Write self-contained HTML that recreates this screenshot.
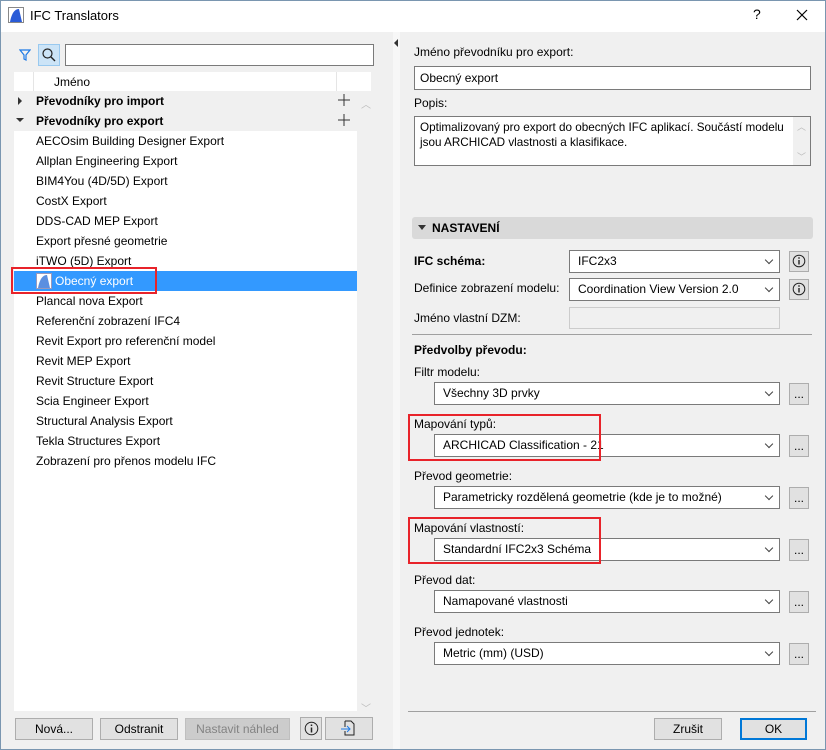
<!DOCTYPE html>
<html><head><meta charset="utf-8"><style>
*{box-sizing:border-box;margin:0;padding:0}
body{width:826px;height:750px;overflow:hidden;font-family:"Liberation Sans",sans-serif;font-size:12px;color:#000;background:#f0f0f0;position:relative}
.a{position:absolute}
.win{left:0;top:0;width:826px;height:750px;border:1px solid #7a96b0;border-top:none}
.title{left:0;top:0;width:826px;height:32px;background:#fff;border-top:1px solid #7a96b0}
.row{position:absolute;left:14px;width:343px;height:20px;line-height:20px;padding-left:22px;white-space:nowrap}
.grp{background:#f0f0f0;font-weight:bold}
.lbl{position:absolute;left:414px;white-space:nowrap}
.dd{position:absolute;background:#fff;border:1px solid #7a7a7a;height:23px;line-height:21px;padding-left:8px;white-space:nowrap}
.dd:after{content:"";position:absolute;right:7px;top:6px;width:5px;height:5px;border-right:1px solid #444;border-bottom:1px solid #444;transform:rotate(45deg)}
.btn{position:absolute;background:#e1e1e1;border:1px solid #adadad;text-align:center;height:22px;line-height:20px}
.dots{width:20px;height:22px;left:789px}
.red{position:absolute;border:2px solid #e8232a}
</style></head><body>
<div class="a title"></div>
<div class="a win"></div>
<svg class="a" style="left:8px;top:7px" width="16" height="16"><rect x="0.5" y="0.5" width="15" height="15" fill="#fff" stroke="#888"/><path d="M2 15 C4 4 8 2 11 2 L14 15 Z" fill="#2a5bd7"/></svg>
<div class="a" style="left:30px;top:8px;font-size:13px">IFC Translators</div>
<div class="a" style="left:753px;top:6px;font-size:14px">?</div>
<svg class="a" style="left:796px;top:9px" width="12" height="12"><path d="M1 1L11 11M11 1L1 11" stroke="#000" stroke-width="1.2"/></svg>

<svg class="a" style="left:19px;top:48px" width="12" height="14"><path d="M1 2H11L7 7V12L5 11V7Z" fill="none" stroke="#1e7ae6" stroke-width="1.2"/></svg>
<div class="a" style="left:38px;top:44px;width:22px;height:22px;background:#cce4f7;border:1px solid #99c9ef"></div>
<svg class="a" style="left:41px;top:47px" width="16" height="16"><circle cx="6.5" cy="6.5" r="4.5" fill="none" stroke="#222" stroke-width="1.2"/><path d="M10 10L14 14" stroke="#222" stroke-width="1.4"/></svg>
<div class="a" style="left:65px;top:44px;width:309px;height:22px;background:#fff;border:1px solid #7a7a7a"></div>
<div class="a" style="left:14px;top:72px;width:357px;height:639px;background:#fff"></div>
<div class="a" style="left:357px;top:91px;width:14px;height:620px;background:#f0f0f0"></div>
<div class="a" style="left:361px;top:96px;color:#bbb;font-size:10px">︿</div>
<div class="a" style="left:361px;top:700px;color:#bbb;font-size:10px">﹀</div>
<div class="row" style="top:72px;padding-left:20px;border-left:1px solid #e5e5e5;left:33px;width:304px;border-right:1px solid #e5e5e5">Jméno</div>
<div class="row grp" style="top:91px">Převodníky pro import</div>
<div class="row grp" style="top:111px">Převodníky pro export</div>
<svg class="a" style="left:16px;top:96px" width="8" height="30"><path d="M2 1L6 5L2 9Z" fill="#333"/><path d="M0 22H8L4 26Z" fill="#333"/></svg>
<svg class="a" style="left:338px;top:94px" width="12" height="32"><path d="M6 0V12M0 6H12M6 20V32M0 26H12" stroke="#333"/></svg>
<div class="row" style="top:131px">AECOsim Building Designer Export</div>
<div class="row" style="top:151px">Allplan Engineering Export</div>
<div class="row" style="top:171px">BIM4You (4D/5D) Export</div>
<div class="row" style="top:191px">CostX Export</div>
<div class="row" style="top:211px">DDS-CAD MEP Export</div>
<div class="row" style="top:231px">Export přesné geometrie</div>
<div class="row" style="top:251px">iTWO (5D) Export</div>
<div class="row" style="top:271px;background:#3399ff;color:#fff;padding-left:41px">Obecný export</div>
<svg class="a" style="left:36px;top:273px" width="16" height="16"><rect x="0.5" y="0.5" width="15" height="15" fill="#fff" stroke="#99b"/><path d="M2 15 C4 4 8 2 11 2 L14 15 Z" fill="#5b8fe0"/></svg>
<div class="row" style="top:291px">Plancal nova Export</div>
<div class="row" style="top:311px">Referenční zobrazení IFC4</div>
<div class="row" style="top:331px">Revit Export pro referenční model</div>
<div class="row" style="top:351px">Revit MEP Export</div>
<div class="row" style="top:371px">Revit Structure Export</div>
<div class="row" style="top:391px">Scia Engineer Export</div>
<div class="row" style="top:411px">Structural Analysis Export</div>
<div class="row" style="top:431px">Tekla Structures Export</div>
<div class="row" style="top:451px">Zobrazení pro přenos modelu IFC</div>
<div class="red" style="left:11px;top:267px;width:146px;height:27px"></div>

<div class="btn" style="left:15px;top:718px;width:78px">Nová...</div>
<div class="btn" style="left:100px;top:718px;width:78px">Odstranit</div>
<div class="btn" style="left:185px;top:718px;width:105px;background:#cccccc;border-color:#bfbfbf;color:#838383">Nastavit náhled</div>
<div class="btn" style="left:300px;top:717px;width:22px;height:23px"></div>
<svg class="a" style="left:304px;top:721px" width="15" height="15"><circle cx="7.5" cy="7.5" r="6.3" fill="none" stroke="#222"/><path d="M7.5 6.5V11.5M7.5 3.5V5" stroke="#222" stroke-width="1.5"/></svg>
<div class="btn" style="left:325px;top:717px;width:48px;height:23px"></div>
<svg class="a" style="left:340px;top:720px" width="16" height="17"><path d="M5 1H11L14 4V15H5V11M5 7V1" fill="none" stroke="#222"/><path d="M1 9H10M7 6L10 9L7 12" fill="none" stroke="#1e7ae6"/></svg>

<div class="a" style="left:393px;top:32px;width:7px;height:717px;background:#f7f7f7"></div>
<svg class="a" style="left:394px;top:39px" width="4" height="8"><path d="M4 0V8L0 4Z" fill="#333"/></svg>

<div class="lbl" style="top:45px">Jméno převodníku pro export:</div>
<div class="a" style="left:414px;top:66px;width:397px;height:24px;background:#fff;border:1px solid #7a7a7a;padding-left:5px;line-height:22px">Obecný export</div>
<div class="lbl" style="top:96px">Popis:</div>
<div class="a" style="left:414px;top:116px;width:397px;height:50px;background:#fff;border:1px solid #7a7a7a;padding:3px 5px;line-height:15px;font-size:11.7px;white-space:nowrap">Optimalizovaný pro export do obecných IFC aplikací. Součástí modelu<br>jsou ARCHICAD vlastnosti a klasifikace.</div>
<div class="a" style="left:793px;top:117px;width:17px;height:48px;background:#f0f0f0"></div>
<div class="a" style="left:797px;top:120px;color:#bbb;font-size:9px">︿</div>
<div class="a" style="left:797px;top:150px;color:#bbb;font-size:9px">﹀</div>

<div class="a" style="left:412px;top:217px;width:401px;height:22px;background:#d9d9d9;border-radius:3px"></div>
<svg class="a" style="left:418px;top:225px" width="8" height="5"><path d="M0 0H8L4 5Z" fill="#333"/></svg>
<div class="a" style="left:432px;top:221px;font-weight:bold">NASTAVENÍ</div>

<div class="lbl" style="top:254px;font-weight:bold">IFC schéma:</div>
<div class="dd" style="left:569px;top:250px;width:211px">IFC2x3</div>
<div class="btn" style="left:789px;top:251px;width:20px;height:21px"></div>
<svg class="a" style="left:792px;top:254px" width="14" height="14"><circle cx="7" cy="7" r="5.8" fill="none" stroke="#222"/><path d="M7 6V10.5M7 3.3V4.8" stroke="#222" stroke-width="1.4"/></svg>
<div class="lbl" style="top:281px">Definice zobrazení modelu:</div>
<div class="dd" style="left:569px;top:278px;width:211px">Coordination View Version 2.0</div>
<div class="btn" style="left:789px;top:279px;width:20px;height:21px"></div>
<svg class="a" style="left:792px;top:282px" width="14" height="14"><circle cx="7" cy="7" r="5.8" fill="none" stroke="#222"/><path d="M7 6V10.5M7 3.3V4.8" stroke="#222" stroke-width="1.4"/></svg>
<div class="lbl" style="top:311px">Jméno vlastní DZM:</div>
<div class="a" style="left:569px;top:307px;width:211px;height:22px;background:#f0f0f0;border:1px solid #ccc"></div>
<div class="a" style="left:412px;top:334px;width:400px;height:1px;background:#a0a0a0"></div>

<div class="lbl" style="top:343px;font-weight:bold">Předvolby převodu:</div>
<div class="lbl" style="top:365px">Filtr modelu:</div>
<div class="dd" style="left:434px;top:382px;width:346px">Všechny 3D prvky</div>
<div class="btn dots" style="top:383px">...</div>
<div class="lbl" style="top:417px">Mapování typů:</div>
<div class="dd" style="left:434px;top:434px;width:346px">ARCHICAD Classification - 21</div>
<div class="btn dots" style="top:435px">...</div>
<div class="lbl" style="top:469px">Převod geometrie:</div>
<div class="dd" style="left:434px;top:486px;width:346px">Parametricky rozdělená geometrie (kde je to možné)</div>
<div class="btn dots" style="top:487px">...</div>
<div class="lbl" style="top:521px">Mapování vlastností:</div>
<div class="dd" style="left:434px;top:538px;width:346px">Standardní IFC2x3 Schéma</div>
<div class="btn dots" style="top:539px">...</div>
<div class="lbl" style="top:573px">Převod dat:</div>
<div class="dd" style="left:434px;top:590px;width:346px">Namapované vlastnosti</div>
<div class="btn dots" style="top:591px">...</div>
<div class="lbl" style="top:625px">Převod jednotek:</div>
<div class="dd" style="left:434px;top:642px;width:346px">Metric (mm) (USD)</div>
<div class="btn dots" style="top:643px">...</div>
<div class="red" style="left:408px;top:414px;width:193px;height:47px"></div>
<div class="red" style="left:408px;top:517px;width:193px;height:47px"></div>

<div class="a" style="left:408px;top:711px;width:408px;height:1px;background:#a0a0a0"></div>
<div class="btn" style="left:654px;top:718px;width:68px">Zrušit</div>
<div class="btn" style="left:740px;top:718px;width:67px;border:2px solid #0078d7;line-height:18px">OK</div>
</body></html>
